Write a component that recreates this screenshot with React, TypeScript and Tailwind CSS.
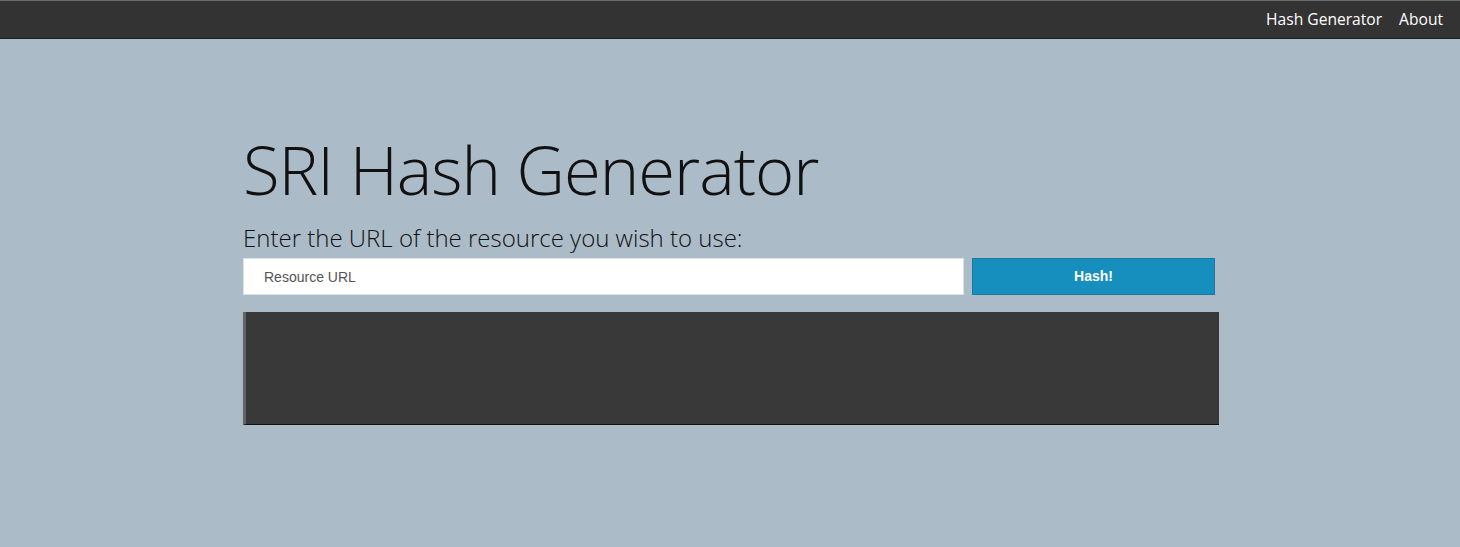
export default function App() {
  return (
    <div className="min-h-[547px] bg-[#abbbc8] font-['Open_Sans',sans-serif]">
      <nav className="flex h-[39px] items-center justify-end gap-[17px] border-t border-t-[#6b6b6b] border-b border-b-[#1e1e1e] bg-[#333333] pr-[17px] text-[15.6px] text-white">
        <a href="#" className="pt-[1px]">Hash Generator</a>
        <a href="#" className="pt-[1px]">About</a>
      </nav>

      <div className="pl-[2px]">
        <main className="mx-auto w-[976px] pt-[94px]">
          <h1 className="text-[67px] font-light leading-[72px] tracking-[-1px] text-[#111]">SRI Hash Generator</h1>
          <p className="mt-[17px] text-[24px] font-light leading-[32px] text-[#111]">
            Enter the URL of the resource you wish to use:
          </p>

          <form className="mt-[4px] flex w-[972px] gap-[8px]">
            <input
              type="text"
              placeholder="Resource URL"
              className="h-[37px] flex-1 border border-[#dde2e6] bg-white px-[20px] font-['Liberation_Sans',sans-serif] text-[14px] text-[#555] placeholder:text-[#555] outline-none"
            />
            <button
              type="button"
              className="h-[37px] w-[243px] border border-[#1b78a3] bg-[#168fbf] font-['Liberation_Sans',sans-serif] text-[14px] font-bold text-white"
            >
              Hash!
            </button>
          </form>

          <div className="mt-[17px] h-[113px] border-l-[3px] border-l-[#646464] border-b border-b-[#111] bg-[#3a393a]" />
        </main>
      </div>
    </div>
  )
}
